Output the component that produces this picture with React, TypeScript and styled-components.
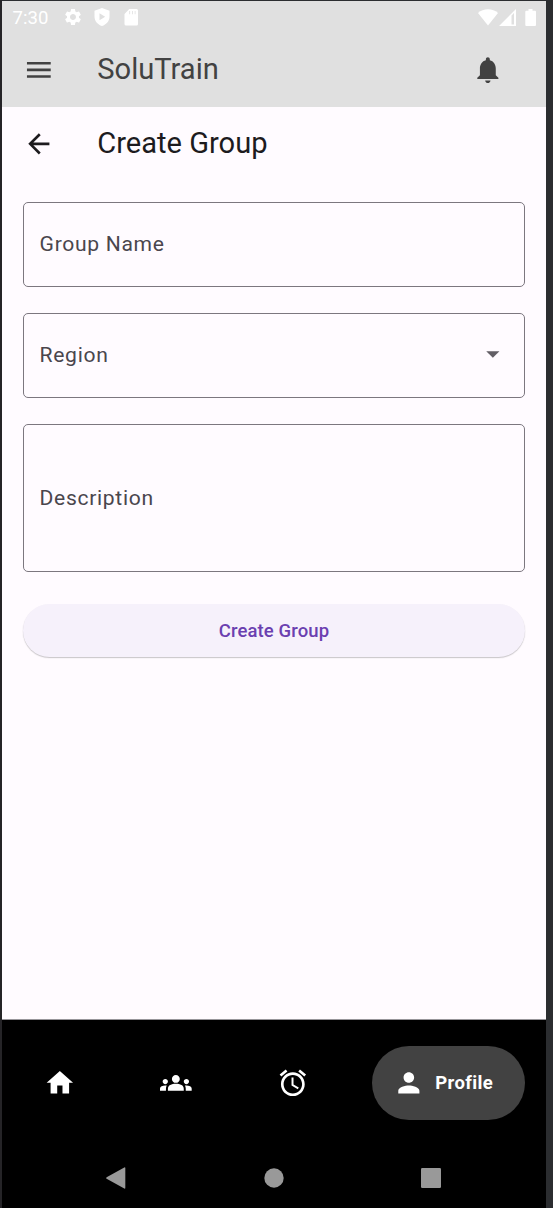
import React from "react";
import styled, { createGlobalStyle } from "styled-components";

const GlobalStyle = createGlobalStyle`
  * { box-sizing: border-box; }
  html, body { margin: 0; padding: 0; background: #2b2d30; overflow: hidden; }
  body { font-family: Roboto, sans-serif; }
`;

const Frame = styled.div`
  width: 553px;
  height: 1208px;
  padding: 1px 7px 0 2px;
  background: linear-gradient(90deg, #252427 0 2px, #2b2d30 2px);
`;

const Screen = styled.div`
  width: 544px;
  height: 1207px;
  display: flex;
  flex-direction: column;
  background: #fffbff;
`;

const Header = styled.header`
  height: 106px;
  background: #e0e0e0;
`;

const StatusBar = styled.div`
  height: 32px;
  display: flex;
  align-items: center;
  padding: 0 8px 0 10.5px;
  color: #fff;
`;

const Time = styled.span`
  width: 50px;
  padding-top: 1px;
  font-size: 18.6px;
  line-height: 32px;
`;

const StatusGroup = styled.div<{ $gap: number; $end?: boolean }>`
  display: flex;
  align-items: center;
  gap: ${(p) => p.$gap}px;
  margin-left: ${(p) => (p.$end ? "auto" : "0")};
`;

const AppBar = styled.div<{ $color: string }>`
  height: 74px;
  flex: none;
  display: flex;
  align-items: center;
  padding: 0 42.2px 0 21.2px;
  color: ${(p) => p.$color};
`;

const Title = styled.h1`
  flex: 1;
  margin: 0 0 0 42.4px;
  padding-bottom: 2px;
  font-size: 29.1px;
  font-weight: 400;
  line-height: 38px;
`;

const IconButton = styled.button`
  display: flex;
  padding: 0;
  border: 0;
  background: none;
  color: inherit;
`;

const Form = styled.form`
  flex: 1;
  display: flex;
  flex-direction: column;
  gap: 26px;
  padding: 21px 21px 0;
`;

const Field = styled.div<{ $height: number }>`
  height: ${(p) => p.$height}px;
  display: flex;
  align-items: center;
  justify-content: space-between;
  padding: 0 15px 2px 15.6px;
  border: 1.3px solid #7c777f;
  border-radius: 5px;
  color: #4a464d;
  font-size: 21.1px;
  letter-spacing: 0.67px;
`;

const DropdownArrow = styled.span`
  display: flex;
  padding-bottom: 1px;
  color: #625e65;
`;

const SubmitButton = styled.button`
  height: 53px;
  margin-top: 6px;
  padding: 0;
  border: 0;
  border-radius: 27px;
  background: #f6f1fb;
  box-shadow: 0 1px 1px rgba(0, 0, 0, 0.18), 0 1px 2px rgba(0, 0, 0, 0.05);
  color: #6b40b0;
  font-family: inherit;
  font-size: 18.5px;
  font-weight: 500;
  letter-spacing: 0.13px;
`;

const BottomArea = styled.footer`
  height: 189px;
  border-top: 1px solid #97959a;
  background: #000;
`;

const TabBar = styled.nav`
  height: 126px;
  display: flex;
  align-items: center;
  justify-content: space-between;
  padding: 0 21px 0 42px;
  color: #fff;
`;

const ActiveTab = styled.div`
  width: 153px;
  height: 74px;
  display: flex;
  align-items: center;
  gap: 10.5px;
  padding-left: 21px;
  margin-left: -21px;
  border-radius: 37px;
  background: #424242;
  font-size: 18.5px;
  font-weight: 700;
  letter-spacing: 0.4px;
`;

const SystemBar = styled.div`
  height: 62px;
  display: flex;
  align-items: center;
  justify-content: space-between;
  padding: 1px 105px 0 104px;
`;

const Glyph = styled.svg`
  display: block;
  flex: none;
  fill: currentColor;
`;

const PATHS = {
  menu: "M3 18h18v-2H3v2zm0-5h18v-2H3v2zm0-7v2h18V6H3z",
  bell: "M12 22c1.1 0 2-.9 2-2h-4c0 1.1.89 2 2 2zm6-6v-5c0-3.07-1.64-5.64-4.5-6.32V4c0-.83-.67-1.5-1.5-1.5s-1.5.67-1.5 1.5v.68C7.63 5.36 6 7.92 6 11v5l-2 2v1h16v-1l-2-2z",
  back: "M20 11H7.83l5.59-5.59L12 4l-8 8 8 8 1.41-1.41L7.83 13H20v-2z",
  home: "M10 20v-6h4v6h5v-8h3L12 3 2 12h3v8z",
  groups:
    "M12 12.75c1.63 0 3.07.39 4.24.9 1.08.48 1.76 1.56 1.76 2.73V18H6v-1.61c0-1.18.68-2.26 1.76-2.73 1.17-.52 2.61-.91 4.24-.91zM4 13c1.1 0 2-.9 2-2s-.9-2-2-2-2 .9-2 2 .9 2 2 2zm1.13 1.1c-.37-.06-.74-.1-1.13-.1-.99 0-1.93.21-2.78.58C.48 14.9 0 15.62 0 16.43V18h4.5v-1.61c0-.83.23-1.61.63-2.29zM20 13c1.1 0 2-.9 2-2s-.9-2-2-2-2 .9-2 2 .9 2 2 2zm4 3.43c0-.81-.48-1.53-1.22-1.85-.85-.37-1.79-.58-2.78-.58-.39 0-.76.04-1.13.1.4.68.63 1.46.63 2.29V18H24v-1.57zM12 6c1.66 0 3 1.34 3 3s-1.34 3-3 3-3-1.34-3-3 1.34-3 3-3z",
  alarm:
    "M22 5.72l-4.6-3.86-1.29 1.53 4.6 3.86L22 5.72zM7.88 3.39L6.6 1.86 2 5.71l1.29 1.53 4.59-3.85zM12.5 8H11v6l4.75 2.85.75-1.23-4-2.37V8zM12 4c-4.97 0-9 4.03-9 9s4.02 9 9 9c4.97 0 9-4.03 9-9s-4.03-9-9-9zm0 16c-3.87 0-7-3.13-7-7s3.13-7 7-7 7 3.13 7 7-3.13 7-7 7z",
  person:
    "M12 12c2.21 0 4-1.79 4-4s-1.79-4-4-4-4 1.79-4 4 1.79 4 4 4zm0 2c-2.67 0-8 1.34-8 4v2h16v-2c0-2.66-5.33-4-8-4z",
  dropdown: "M7 10l5 5 5-5z",
  gear: "M19.14 12.94c.04-.3.06-.61.06-.94 0-.32-.02-.64-.07-.94l2.03-1.58c.18-.14.23-.41.12-.61l-1.92-3.32c-.12-.22-.37-.29-.59-.22l-2.39.96c-.5-.38-1.03-.7-1.62-.94l-.36-2.54c-.04-.24-.24-.41-.48-.41h-3.84c-.24 0-.43.17-.47.41l-.36 2.54c-.59.24-1.13.57-1.62.94l-2.39-.96c-.22-.08-.47 0-.59.22L2.74 8.87c-.12.21-.08.47.12.61l2.03 1.58c-.05.3-.09.63-.09.94s.02.64.07.94l-2.03 1.58c-.18.14-.23.41-.12.61l1.92 3.32c.12.22.37.29.59.22l2.39-.96c.5.38 1.03.7 1.62.94l.36 2.54c.05.24.24.41.48.41h3.84c.24 0 .44-.17.47-.41l.36-2.54c.59-.24 1.13-.56 1.62-.94l2.39.96c.22.08.47 0 .59-.22l1.92-3.32c.12-.22.07-.47-.12-.61l-2.01-1.58zM12 15.6c-1.98 0-3.6-1.62-3.6-3.6s1.62-3.6 3.6-3.6 3.6 1.62 3.6 3.6-1.62 3.6-3.6 3.6z",
};

const Icon = ({ name, size = 31.7 }: { name: keyof typeof PATHS; size?: number }) => (
  <Glyph width={size} height={size} viewBox="0 0 24 24">
    <path d={PATHS[name]} />
  </Glyph>
);

export default function App() {
  return (
    <>
      <GlobalStyle />
      <Frame>
        <Screen>
          <Header>
            <StatusBar>
              <Time>7:30</Time>
              <StatusGroup $gap={11.5}>
                <Icon name="gear" size={20} />
                <Glyph width="16" height="18" viewBox="0 0 16 18">
                  <path
                    fillRule="evenodd"
                    d="M8 0L15.5 2.8V8.5C15.5 13 12.3 16.7 8 18 3.7 16.7.5 13 .5 8.5V2.8ZM5.5 5.2V12.2L11.2 8.7Z"
                  />
                </Glyph>
                <Glyph width="18" height="17" viewBox="0 0 18 17">
                  <path
                    fillRule="evenodd"
                    d="M7.3 0H14.5Q16 0 16 1.5V15Q16 16.5 14.5 16.5H4Q2.5 16.5 2.5 15V5ZM7.3 2V5.2H8.1V2ZM10 2V5.2H10.8V2ZM12.7 2V5.2H13.5V2Z"
                  />
                </Glyph>
              </StatusGroup>
              <StatusGroup $gap={1} $end>
                <Glyph width="20" height="17" viewBox="0 0 20 17">
                  <path d="M10 16.500L0 4Q4.300 .3 10 .3T20 4Z" />
                </Glyph>
                <Glyph width="17" height="17" viewBox="0 0 17 17">
                  <path fillRule="evenodd" d="M17 0V17H0ZM15 4L12.500 6.500V15.500H15Z" />
                </Glyph>
                <Glyph width="21" height="17" viewBox="0 0 21 17">
                  <path d="M11.500 0H15.500V1.800H18Q19 1.800 19 2.800V16Q19 17 18 17H9.300Q8.300 17 8.300 16V2.800Q8.300 1.800 9.300 1.800H11.500Z" />
                </Glyph>
              </StatusGroup>
            </StatusBar>
            <AppBar $color="#424242">
              <IconButton aria-label="Menu">
                <Icon name="menu" />
              </IconButton>
              <Title>SoluTrain</Title>
              <IconButton aria-label="Notifications">
                <Icon name="bell" />
              </IconButton>
            </AppBar>
          </Header>
          <AppBar $color="#1d1b1e">
            <IconButton aria-label="Back">
              <Icon name="back" />
            </IconButton>
            <Title as="h2">Create Group</Title>
          </AppBar>
          <Form>
            <Field $height={85}>Group Name</Field>
            <Field $height={85}>
              Region
              <DropdownArrow>
                <Icon name="dropdown" />
              </DropdownArrow>
            </Field>
            <Field $height={148}>Description</Field>
            <SubmitButton type="button">Create Group</SubmitButton>
          </Form>
          <BottomArea>
            <TabBar>
              <Icon name="home" />
              <Icon name="groups" />
              <Icon name="alarm" />
              <ActiveTab>
                <Icon name="person" />
                Profile
              </ActiveTab>
            </TabBar>
            <SystemBar>
              <Glyph width="20" height="22" viewBox="0 0 20 22" color="#999">
                <path d="M18.300 .5Q19.300 0 19.300 1.200V20.800Q19.300 22 18.300 21.500L.6 11.800Q-.2 11 .6 10.200Z" />
              </Glyph>
              <Glyph width="20" height="20" viewBox="0 0 20 20" color="#999">
                <circle cx="10" cy="10" r="9.700" />
              </Glyph>
              <Glyph width="20" height="20" viewBox="0 0 20 20" color="#999">
                <rect width="20" height="20" rx="1.300" />
              </Glyph>
            </SystemBar>
          </BottomArea>
        </Screen>
      </Frame>
    </>
  );
}
